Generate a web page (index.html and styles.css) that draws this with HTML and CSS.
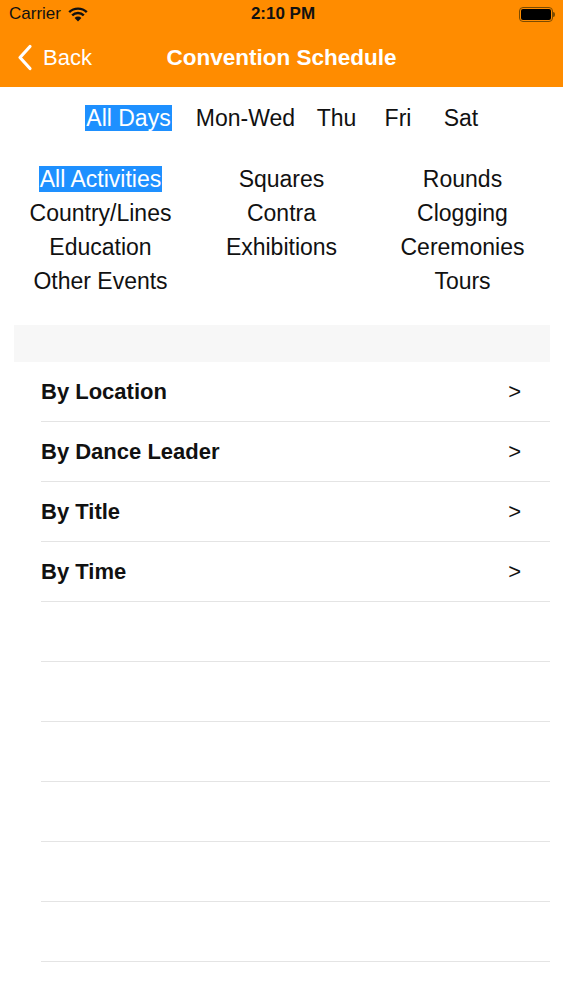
FILE: index.html
```html
<!DOCTYPE html>
<html lang="en">

<head>
  <meta charset="UTF-8">
  <title>Convention Schedule</title>
  <link rel="stylesheet" href="styles.css">
</head>

<body>
  <header class="topbar">
    <div class="status">
      <div class="carrier">
        Carrier
        <svg class="wifi" width="20" height="15" viewBox="0 0 20 15">
          <path d="M10 14.5 L6.6 10.9 A4.8 4.8 0 0 1 13.4 10.9 Z" fill="#111" />
          <path d="M4.2 8.4 A8.2 8.2 0 0 1 15.8 8.4" stroke="#111" stroke-width="2.4" fill="none" />
          <path d="M1.2 5.2 A12.5 12.5 0 0 1 18.8 5.2" stroke="#111" stroke-width="2.4" fill="none" />
        </svg>
      </div>
      <div class="clock">2:10 PM</div>
      <div class="battery">
        <span class="battery-body"><span class="battery-fill"></span></span>
        <span class="battery-tip"></span>
      </div>
    </div>
    <nav class="navbar">
      <a class="back" href="#">
        <svg width="16" height="27" viewBox="0 0 16 27">
          <path d="M13 2.5 L3 13.5 L13 24.5" stroke="#fff" stroke-width="3.2" fill="none" stroke-linecap="round" stroke-linejoin="round" />
        </svg>
        Back
      </a>
      <h1 class="title">Convention Schedule</h1>
    </nav>
  </header>

  <div class="days">
    <span class="day"><span class="selected">All Days</span></span>
    <span class="day">Mon-Wed</span>
    <span class="day">Thu</span>
    <span class="day">Fri</span>
    <span class="day">Sat</span>
  </div>

  <div class="activities">
    <span class="activity"><span class="selected">All Activities</span></span>
    <span class="activity">Squares</span>
    <span class="activity">Rounds</span>
    <span class="activity">Country/Lines</span>
    <span class="activity">Contra</span>
    <span class="activity">Clogging</span>
    <span class="activity">Education</span>
    <span class="activity">Exhibitions</span>
    <span class="activity">Ceremonies</span>
    <span class="activity">Other Events</span>
    <span class="activity"></span>
    <span class="activity">Tours</span>
  </div>

  <div class="table">
    <div class="table-header"></div>
    <a class="row" href="#"><span>By Location</span><span class="arrow">&gt;</span></a>
    <a class="row" href="#"><span>By Dance Leader</span><span class="arrow">&gt;</span></a>
    <a class="row" href="#"><span>By Title</span><span class="arrow">&gt;</span></a>
    <a class="row" href="#"><span>By Time</span><span class="arrow">&gt;</span></a>
    <div class="row"></div>
    <div class="row"></div>
    <div class="row"></div>
    <div class="row"></div>
    <div class="row"></div>
    <div class="row"></div>
  </div>
</body>

</html>
```

FILE: styles.css
```css
body {
  margin: 0;
  width: 563px;
  background-color: #fff;
  font-family: "Liberation Sans", Arial, sans-serif;
  color: #111;
}

.topbar {
  background-color: #ff8c00;
  height: 87px;
}

.status {
  height: 28px;
  display: grid;
  grid-template-columns: 1fr auto 1fr;
  align-items: center;
  padding: 0 8px 0 9px;
  font-size: 17px;
  color: #111;
}

.carrier {
  display: flex;
  align-items: center;
  gap: 7px;
}

.clock {
  font-weight: bold;
  padding-left: 2px;
}

.battery {
  justify-self: end;
  display: flex;
  align-items: center;
}

.battery-body {
  width: 30px;
  height: 11px;
  border: 1.5px solid #7a4a00;
  border-radius: 4px;
  padding: 1px;
  box-sizing: content-box;
  display: flex;
}

.battery-fill {
  flex: 1;
  background-color: #000;
  border-radius: 2px;
}

.battery-tip {
  width: 2px;
  height: 5px;
  background-color: #7a4a00;
  border-radius: 0 2px 2px 0;
}

.navbar {
  height: 59px;
  display: flex;
  align-items: center;
  justify-content: center;
  position: relative;
}

.back {
  position: absolute;
  left: 17px;
  top: 16px;
  display: flex;
  align-items: center;
  gap: 10px;
  color: #fff;
  text-decoration: none;
  font-size: 22px;
}

.title {
  margin: 0;
  color: #fff;
  font-size: 22.5px;
  font-weight: bold;
}

.days {
  display: grid;
  grid-template-columns: 100px 134px 48px 75px 51px;
  justify-content: center;
  margin-top: 18px;
  padding-left: 2px;
  font-size: 23px;
  line-height: 26px;
  text-align: center;
}

.selected {
  background-color: #1e90ff;
  color: #fff;
  padding: 0 1px;
}

.activities {
  display: grid;
  grid-template-columns: repeat(3, 1fr);
  grid-auto-rows: 34px;
  padding: 0 10px;
  margin-top: 31px;
  font-size: 23px;
  line-height: 26px;
  text-align: center;
  align-items: center;
}

.table {
  margin: 27px 13px 0 14px;
}

.table-header {
  height: 37px;
  background-color: #f7f7f7;
}

.row {
  height: 59px;
  margin-left: 27px;
  border-bottom: 1px solid #e4e4e4;
  display: flex;
  align-items: center;
  justify-content: space-between;
  padding-right: 29px;
  color: #111;
  text-decoration: none;
  font-size: 22px;
  font-weight: bold;
}

.arrow {
  font-weight: normal;
  font-size: 22px;
}
```
